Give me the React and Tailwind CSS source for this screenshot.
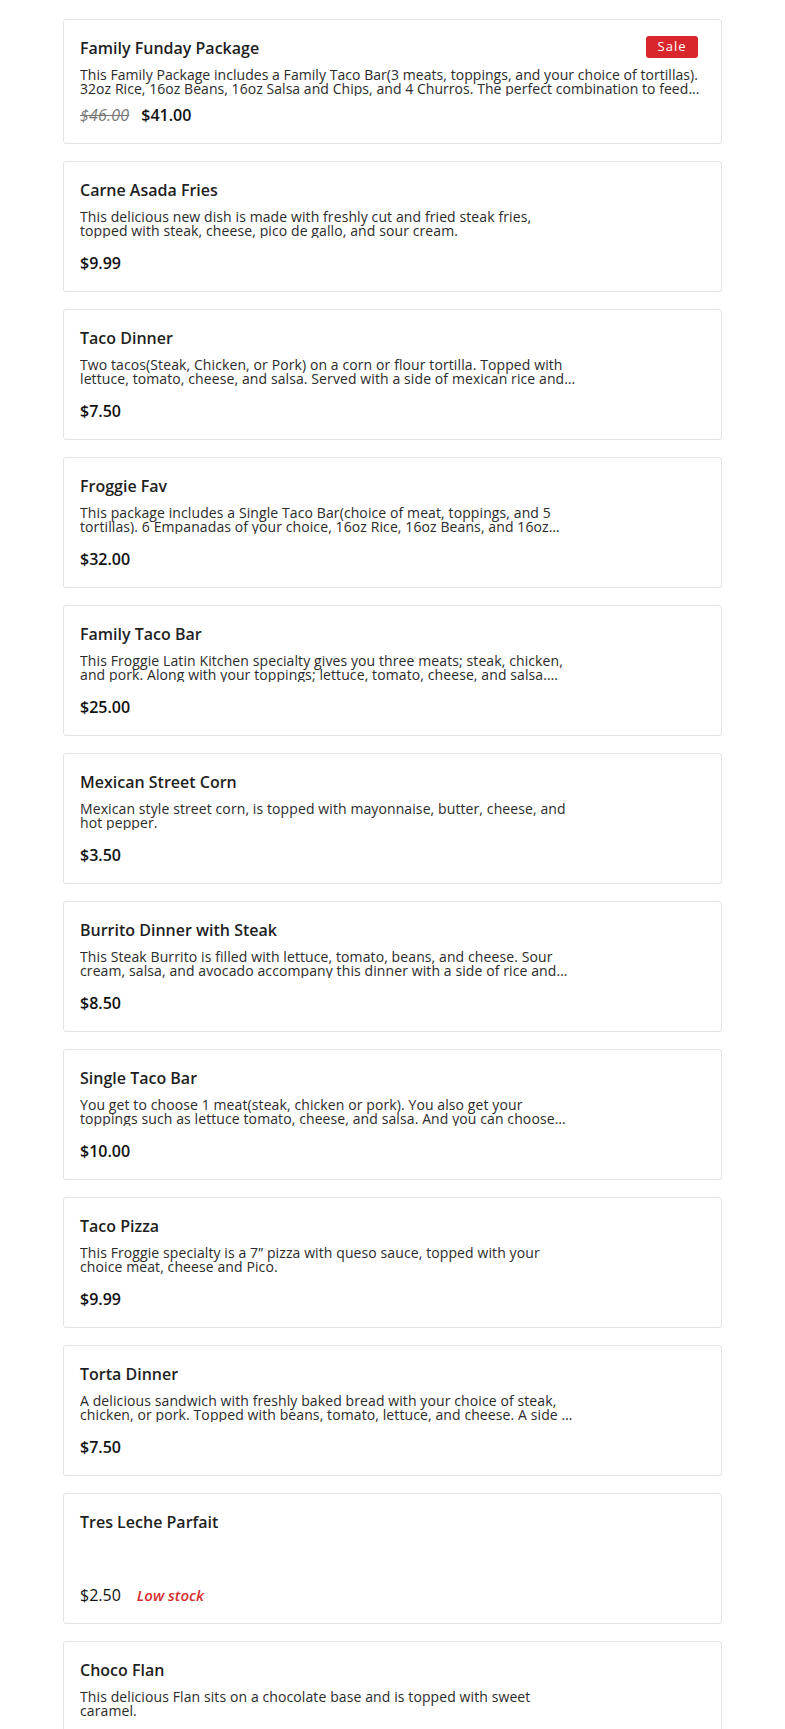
import React from "react";

const items = [
  {
    name: "Carne Asada Fries",
    desc: "This delicious new dish is made with freshly cut and fried steak fries, topped with steak, cheese, pico de gallo, and sour cream.",
    price: "$9.99",
  },
  {
    name: "Taco Dinner",
    desc: "Two tacos(Steak, Chicken, or Pork) on a corn or flour tortilla. Topped with lettuce, tomato, cheese, and salsa. Served with a side of mexican rice and beans.",
    price: "$7.50",
  },
  {
    name: "Froggie Fav",
    desc: "This package includes a Single Taco Bar(choice of meat, toppings, and 5 tortillas). 6 Empanadas of your choice, 16oz Rice, 16oz Beans, and 16oz Salsa and Chips.",
    price: "$32.00",
  },
  {
    name: "Family Taco Bar",
    desc: "This Froggie Latin Kitchen specialty gives you three meats; steak, chicken, and pork. Along with your toppings; lettuce, tomato, cheese, and salsa. Comes with 15 tortillas.",
    price: "$25.00",
  },
  {
    name: "Mexican Street Corn",
    desc: "Mexican style street corn, is topped with mayonnaise, butter, cheese, and hot pepper.",
    price: "$3.50",
  },
  {
    name: "Burrito Dinner with Steak",
    desc: "This Steak Burrito is filled with lettuce, tomato, beans, and cheese. Sour cream, salsa, and avocado accompany this dinner with a side of rice and beans.",
    price: "$8.50",
  },
  {
    name: "Single Taco Bar",
    desc: "You get to choose 1 meat(steak, chicken or pork). You also get your toppings such as lettuce tomato, cheese, and salsa. And you can choose corn or flour tortillas.",
    price: "$10.00",
  },
  {
    name: "Taco Pizza",
    desc: "This Froggie specialty is a 7\u201D pizza with queso sauce, topped with your choice meat, cheese and Pico.",
    price: "$9.99",
  },
  {
    name: "Torta Dinner",
    desc: "A delicious sandwich with freshly baked bread with your choice of steak, chicken, or pork. Topped with beans, tomato, lettuce, and cheese. A side of rice and beans.",
    price: "$7.50",
  },
  {
    name: "Tres Leche Parfait",
    desc: "",
    price: "$2.50",
    low: true,
  },
  {
    name: "Choco Flan",
    desc: "This delicious Flan sits on a chocolate base and is topped with sweet caramel.",
    price: "$5.00",
  },
];

function Card({ item }) {
  return (
    <div className="flex h-[131px] flex-col rounded-[3px] border border-[#e3e3e3] bg-white px-4 pt-4 pb-4">
      <h3 className="text-[16px] leading-6 font-semibold text-[#1f1f1f]">{item.name}</h3>
      {item.desc ? (
        <p className="mt-2 line-clamp-2 max-w-[498px] text-[14px] leading-[14px] tracking-[0.1px] text-[#2b2b2b]">
          {item.desc}
        </p>
      ) : null}
      <div className="mt-auto flex items-baseline gap-4">
        {item.low ? (
          <>
            <span className="text-[16px] leading-6 font-normal text-[#111]">{item.price}</span>
            <span className="text-[15px] leading-6 font-semibold italic text-[#d32f2f]">Low stock</span>
          </>
        ) : (
          <span className="text-[16px] leading-6 font-semibold text-[#111]">{item.price}</span>
        )}
      </div>
    </div>
  );
}

export default function App() {
  return (
    <div className="h-[1729px] overflow-hidden bg-white px-[63px] pt-[19px] font-['Open_Sans','Noto_Sans',sans-serif]">
      <div className="flex flex-col gap-[17px]">
        <div className="rounded-[3px] border border-[#e3e3e3] bg-white pt-4 pb-4 pl-4 pr-[23px]">
          <div className="flex items-start justify-between">
            <h3 className="text-[16px] leading-6 font-semibold text-[#1f1f1f]">Family Funday Package</h3>
            <span className="flex h-[22px] w-[52px] items-center justify-center rounded-[3px] bg-[#d8262c] text-[13px] tracking-[1px] text-white">
              Sale
            </span>
          </div>
          <p className="mt-2 mr-[-4px] line-clamp-2 text-[14px] leading-[14px] tracking-[0.05px] text-[#2b2b2b]">
            This Family Package includes a Family Taco Bar(3 meats, toppings, and your choice of tortillas). 32oz Rice, 16oz Beans, 16oz Salsa and Chips, and 4 Churros. The perfect combination to feed a family of four!
          </p>
          <div className="mt-[7px] flex items-baseline gap-3">
            <span className="text-[16px] leading-6 tracking-[0.2px] italic text-[#777] line-through">$46.00</span>
            <span className="text-[16px] leading-6 font-semibold text-[#111]">$41.00</span>
          </div>
        </div>
        {items.map((item) => (
          <Card key={item.name} item={item} />
        ))}
      </div>
    </div>
  );
}
